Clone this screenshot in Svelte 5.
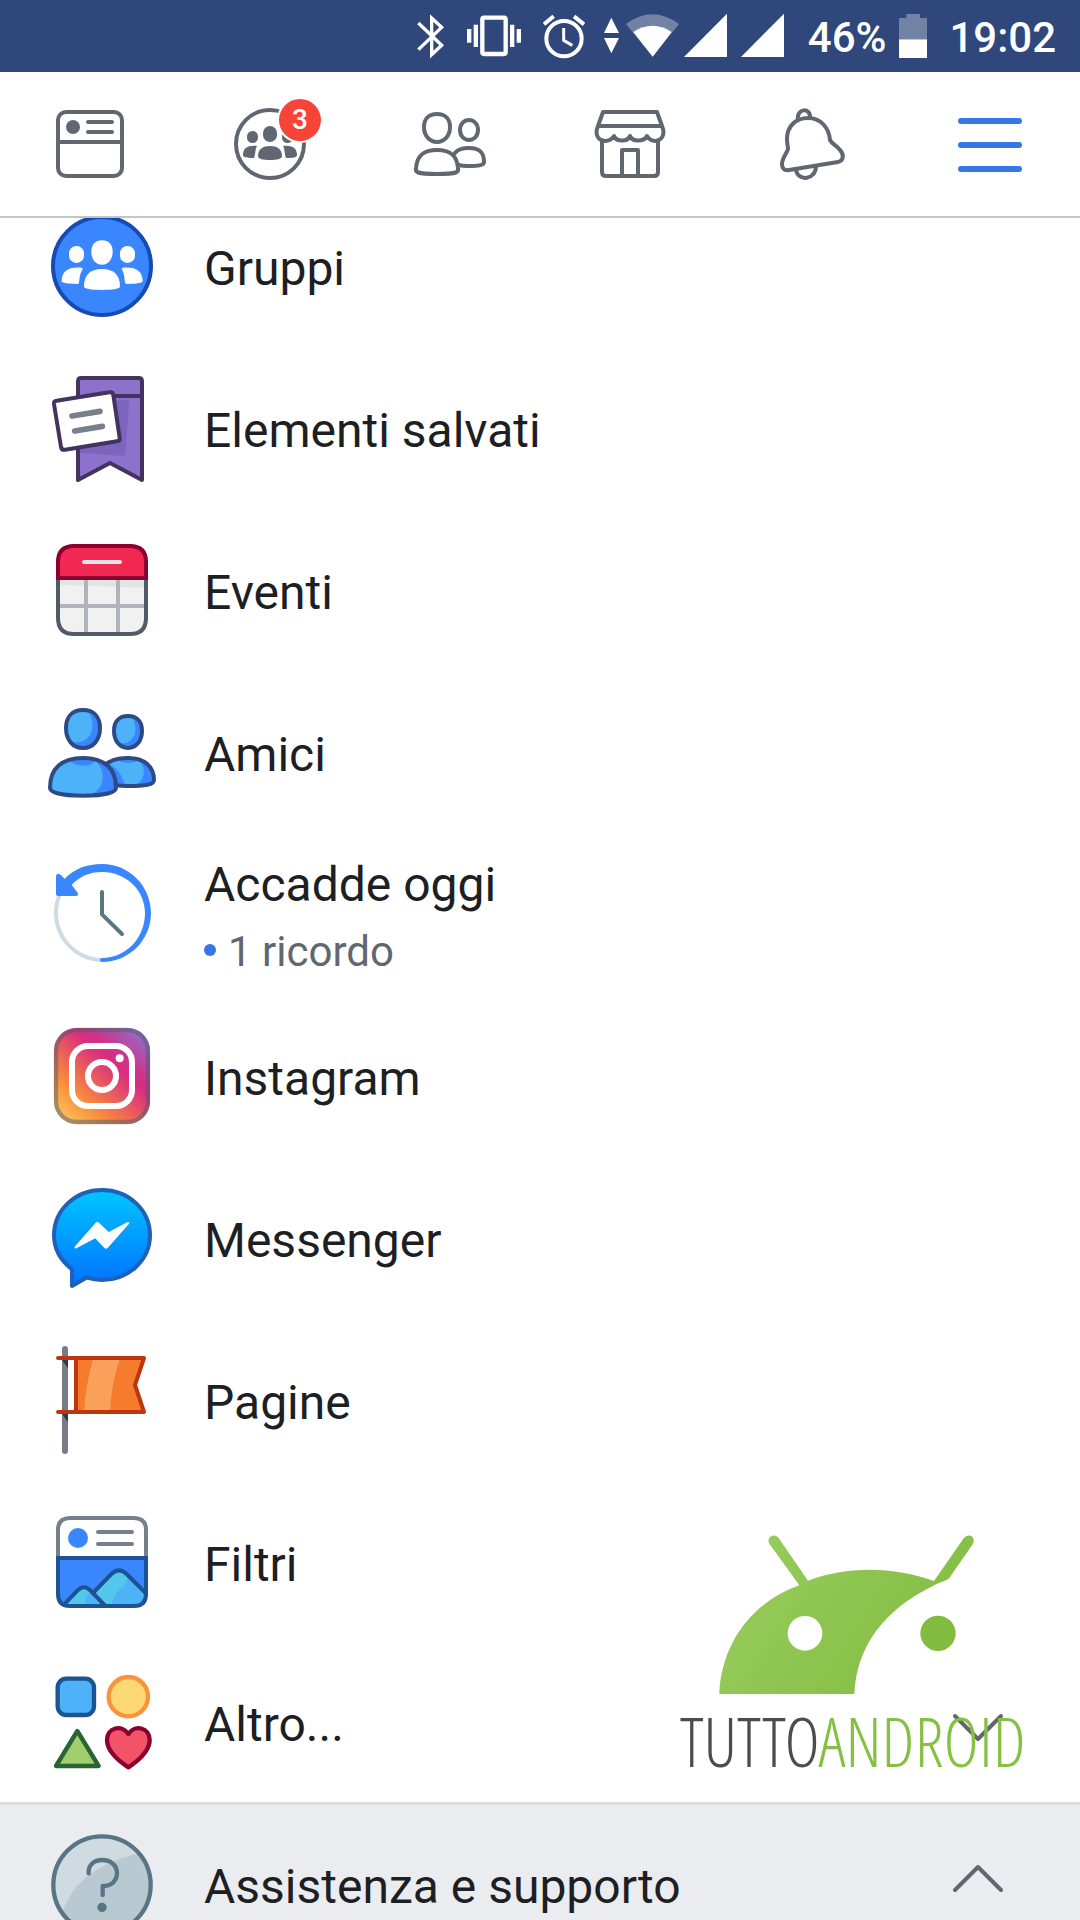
<script>
  const tabs = ['Notizie', 'Gruppi', 'Amici', 'Marketplace', 'Notifiche', 'Menu'];

  const items = [
    { id: 'groups', label: 'Gruppi' },
    { id: 'saved', label: 'Elementi salvati' },
    { id: 'events', label: 'Eventi' },
    { id: 'friends', label: 'Amici' },
    { id: 'memories', label: 'Accadde oggi', note: '1 ricordo' },
    { id: 'instagram', label: 'Instagram' },
    { id: 'messenger', label: 'Messenger' },
    { id: 'pages', label: 'Pagine' },
    { id: 'filters', label: 'Filtri' }
  ];
</script>

{#snippet tabIcon(name)}
  <svg class="tab-icon" viewBox="0 0 72 72" aria-hidden="true">
    {#if name === 'Notizie'}
      <rect x="4" y="4" width="64" height="64" rx="8" />
      <path d="M4 34H68M34 14H58M34 24H58" />
      <circle class="solid" cx="19" cy="19" r="7" />
    {:else if name === 'Gruppi'}
      <circle cx="36" cy="36" r="34" />
      <g class="solid">
        <rect x="29" y="18" width="14" height="16" rx="7" />
        <path d="M24 48C24 41 29 38 36 38S48 41 48 48C48 51 43 52 36 52S24 51 24 48Z" />
        <rect x="13" y="23" width="11" height="12" rx="5.5" />
        <rect x="48" y="23" width="11" height="12" rx="5.5" />
        <path d="M9 47C9 40 14 37 23 38C21 41 22 44 20 50C15 50 9 50 9 47Z" />
        <path d="M63 47C63 40 58 37 49 38C51 41 50 44 52 50C57 50 63 50 63 47Z" />
      </g>
    {:else if name === 'Amici'}
      <path d="M23 6C31 6 36 11 36 19C36 28 30 34 23 34S10 28 10 19C10 11 15 6 23 6Z" />
      <path d="M55 12C60 12 64 16 64 22C64 28 60 32 55 32S46 28 46 22C46 16 50 12 55 12Z" />
      <path d="M2 60C3 48 9 42 23 42S43 48 44 60C45 64 44 66 23 66S1 64 2 60Z" />
      <path d="M41 45C44 41 49 40 55 40C66 40 70 45 70 54C70 57 65 58 55 58C51 58 48 58 45 57" />
    {:else if name === 'Marketplace'}
      <path d="M9 4H63L68 18H4ZM4 18C0 27 5 33 11 33C15 33 18 31 20 28C22 34 34 34 36 28C38 34 50 34 53 28C55 31 58 33 61 33C67 33 72 27 68 18" />
      <path d="M8 32V64Q8 68 12 68H60Q64 68 64 64V32M28 68V42H44V68" />
    {:else if name === 'Notifiche'}
      <path d="M24 12C22 0 37 -1 36 10M22 62C24 74 42 72 42 58" />
      <path d="M34 10C21 10 13 19 13 31C13 36 14 38 14 41C13 45 8 50 8 56C8 60 10 63 15 62L64 54C70 53 70 46 66 42C62 37 58 36 56 32C55 20 47 10 34 10Z" />
    {:else}
      <path class="bars" d="M7 13H65M7 37H65M7 61H65" />
    {/if}
  </svg>
{/snippet}

{#snippet people()}
  <g fill="#fff">
    <path d="M216 91C236 91 248 104 248 125C248 148 235 164 216 164S184 148 184 125C184 104 196 91 216 91Z" />
    <path d="M216 177C252 177 270 196 270 229C270 237 250 240 216 240S162 237 162 229C162 196 180 177 216 177Z" />
    <rect x="117" y="108" width="45" height="51" rx="22" />
    <rect x="270" y="108" width="45" height="51" rx="22" />
    <path d="M95 213C96 184 113 170 155 173Q160 174 157 179C149 191 149 204 147 218Q147 222 142 222C110 221 95 219 95 213Z" />
    <path d="M338 213C337 184 320 170 278 173Q273 174 276 179C284 191 283 204 285 218Q286 222 291 222C323 221 338 219 338 213Z" />
  </g>
{/snippet}

{#snippet itemIcon(id)}
  {#if id === 'groups'}
    <svg class="icon" viewBox="54 6 324 324" aria-hidden="true">
      <circle cx="216" cy="168" r="147" fill="#3a86ff" stroke="#164bb5" stroke-width="12" />
      {@render people()}
    </svg>
  {:else if id === 'saved'}
    <svg class="icon" viewBox="54 492 324 324" stroke-width="12" stroke-linejoin="round" stroke-linecap="round" aria-hidden="true">
      <path d="M144 810V514Q144 504 154 504H326Q336 504 336 514V810L240 759Z" fill="#8c72cb" stroke="#44335f" />
      <path d="M150 570H288Q298 570 297 580L286 730Q285 739 276 738L150 728Z" fill="#7d64bf" />
      <path d="M230 558H336" stroke="#44335f" />
      <path d="M80 572L238 547Q248 545 250 555L269 684Q270 693 261 694L105 719Q95 721 93 711L72 582Q71 573 80 572Z" fill="#fff" stroke="#44335f" />
      <path d="M126 618L210 604M134 663L217 649" stroke="#777f8b" stroke-width="17" />
    </svg>
  {:else if id === 'events'}
    <svg class="icon" viewBox="54 48 324 324" fill="none" stroke-width="12" aria-hidden="true">
      <path d="M84 174V294Q84 342 132 342H300Q348 342 348 294V174Z" fill="#f1f1f2" />
      <path d="M84 180H348V204L84 194Z" fill="#e4e4e5" />
      <path d="M168 180V342M264 180V342M84 258H348" stroke="#b0b3bc" />
      <path d="M84 178V294Q84 342 132 342H300Q348 342 348 294V178" stroke="#505a6b" />
      <path d="M84 174V126Q84 78 132 78H300Q348 78 348 126V174Z" fill="#f02852" stroke="#8c0030" />
      <path d="M162 126H270" stroke="#e4e4e5" stroke-linecap="round" />
    </svg>
  {:else if id === 'friends'}
    <svg class="icon" viewBox="54 534 324 324" fill="none" stroke-width="12" stroke-linejoin="round" aria-hidden="true">
      <path d="M222 740C235 722 256 714 294 714C344 714 372 740 372 780C372 794 345 798 294 798C278 798 266 797 250 795Z" fill="#4db2f8" />
      <path d="M230 728C262 742 280 768 284 798H250Z" fill="#3a86ff" />
      <path d="M324 716C352 745 345 782 314 797C350 796 372 792 372 780C372 744 354 721 324 716Z" fill="#3a86ff" />
      <path d="M264 718H324C322 732 267 732 264 718Z" fill="#3a86ff" />
      <path d="M222 740C235 722 256 714 294 714C344 714 372 740 372 780C372 794 345 798 294 798C278 798 266 797 250 795" stroke="#2d4a86" />
      <path d="M159 714C222 714 258 745 258 803C258 820 215 827 159 827S60 820 60 803C60 745 96 714 159 714Z" fill="#4db2f8" />
      <path d="M190 717C232 748 226 808 180 826C227 825 258 818 258 803C258 754 234 725 190 717Z" fill="#3a86ff" />
      <path d="M120 716H196C198 744 122 744 120 716Z" fill="#3a86ff" />
      <path d="M159 714C222 714 258 745 258 803C258 820 215 827 159 827S60 820 60 803C60 745 96 714 159 714Z" stroke="#2d4a86" />
      <path d="M159 570C191 570 210 590 210 624C210 659 190 684 159 684S108 659 108 624C108 590 127 570 159 570Z" fill="#4db2f8" />
      <path d="M172 571C200 607 194 675 124 667C133 678 145 684 159 684C190 684 210 659 210 624C210 594 196 574 172 571Z" fill="#3a86ff" />
      <path d="M159 570C191 570 210 590 210 624C210 659 190 684 159 684S108 659 108 624C108 590 127 570 159 570Z" stroke="#2d4a86" />
      <path d="M294 588C320 588 336 604 336 632C336 662 319 684 294 684S252 662 252 632C252 604 268 588 294 588Z" fill="#4db2f8" />
      <path d="M304 589C327 620 319 676 268 670C276 680 284 684 294 684C319 684 336 662 336 632C336 608 324 591 304 589Z" fill="#3a86ff" />
      <path d="M294 588C320 588 336 604 336 632C336 662 319 684 294 684S252 662 252 632C252 604 268 588 294 588Z" stroke="#2d4a86" />
    </svg>
  {:else if id === 'memories'}
    <svg class="icon" viewBox="54 60 324 324" fill="none" aria-hidden="true">
      <path d="M90 162A141 141 0 0 0 216 360" stroke="#cfdbe2" stroke-width="12" />
      <path d="M104 116C132 86 172 72 216 72C298 72 363 138 363 219C363 300 298 366 216 366Q210 366 210 360T216 354C288 354 345 294 345 219C345 150 288 96 216 96C178 96 148 110 125 135L142 157Q148 168 137 168H84Q78 168 78 162V108Q80 98 90 103Z" fill="#3a86ff" />
      <path d="M216 156V223L276 282" stroke="#5b7683" stroke-width="12" stroke-linecap="round" stroke-linejoin="round" />
    </svg>
  {:else if id === 'instagram'}
    <svg class="icon" viewBox="54 546 324 324" aria-hidden="true">
      <defs>
        <linearGradient id="ig" x1="0.08" y1="1" x2="0.94" y2="0.04">
          <stop offset="0" stop-color="#fccb62" />
          <stop offset="0.25" stop-color="#f98f3b" />
          <stop offset="0.64" stop-color="#d92d7f" />
          <stop offset="0.72" stop-color="#d0328a" />
          <stop offset="1" stop-color="#8a73cf" />
        </linearGradient>
      </defs>
      <rect x="72" y="564" width="288" height="288" rx="68" fill="url(#ig)" />
      <rect x="78" y="570" width="276" height="276" rx="62" fill="none" stroke="#505a6b" stroke-opacity="0.5" stroke-width="13" />
      <rect x="126" y="618" width="180" height="180" rx="48" fill="none" stroke="#fff" stroke-width="18" />
      <circle cx="216" cy="708" r="42" fill="none" stroke="#fff" stroke-width="18" />
      <circle cx="269" cy="655" r="12" fill="#fff" />
    </svg>
  {:else if id === 'messenger'}
    <svg class="icon" viewBox="54 72 324 324" aria-hidden="true">
      <defs>
        <linearGradient id="ms" x1="0" y1="0" x2="0" y2="1">
          <stop offset="0" stop-color="#00c6ff" />
          <stop offset="1" stop-color="#0072ff" />
        </linearGradient>
      </defs>
      <path d="M126 378V328C92 302 72 268 72 226C72 150 136 90 216 90S360 150 360 226C360 300 296 360 216 360C198 360 184 357 169 353Z" fill="url(#ms)" stroke="#2160b8" stroke-width="12" stroke-linejoin="round" />
      <path d="M134 260L197 188Q202 184 207 188L236 216L293 186Q300 185 297 191L233 264Q228 269 223 264L196 235L139 265Q131 267 134 260Z" fill="#fff" />
    </svg>
  {:else if id === 'pages'}
    <svg class="icon" viewBox="54 558 324 324" fill="none" stroke-linejoin="round" stroke-linecap="round" aria-hidden="true">
      <path d="M105 567V873" stroke="#777c88" stroke-width="18" />
      <path d="M96 600H114V625ZM96 762H114V787Z" fill="#303947" />
      <path d="M138 594H342L315 675L342 756H138Z" fill="#f57c2c" />
      <path d="M190 594H270Q243 675 240 756H162Q167 675 190 594Z" fill="#f9a15a" />
      <path d="M84 594H342L315 675L342 756H84M138 594V756" stroke="#bc3710" stroke-width="12" />
    </svg>
  {:else if id === 'filters'}
    <svg class="icon" viewBox="54 54 324 324" fill="none" stroke-width="12" aria-hidden="true">
      <defs>
        <clipPath id="photo"><path d="M84 204H348V310Q348 348 312 348H120Q84 348 84 310Z" /></clipPath>
      </defs>
      <path d="M84 204V120Q84 84 120 84H312Q348 84 348 120V204" stroke="#777f8b" />
      <circle cx="144" cy="144" r="30" fill="#3a86ff" />
      <path d="M204 126H306M204 162H306" stroke="#777f8b" stroke-linecap="round" />
      <g clip-path="url(#photo)">
        <path d="M84 204H348V348H84Z" fill="#3a86ff" />
        <path d="M180 320L244 252Q267 230 290 252L360 322V360H180Z" fill="#54c7ec" />
        <path d="M290 252C302 295 246 292 247 348H360V322Z" fill="#4db2f8" />
        <path d="M190 308L244 252Q267 230 290 252L360 322" stroke="#1c5393" />
        <path d="M90 356L142 302Q160 282 180 300L234 356Z" fill="#54c7ec" />
        <path d="M180 302C182 314 160 314 167 350H234Z" fill="#4db2f8" />
        <path d="M90 356L142 302Q160 282 180 300L234 356" stroke="#1c5393" />
      </g>
      <path d="M84 204H348V312Q348 348 312 348H120Q84 348 84 312Z" stroke="#1c5393" />
    </svg>
  {:else if id === 'more'}
    <svg class="icon" viewBox="54 534 324 324" stroke-width="13" stroke-linejoin="round" aria-hidden="true">
      <rect x="83" y="566" width="109" height="109" rx="26" fill="#4db2f8" stroke="#1c5393" />
      <circle cx="295" cy="620" r="59" fill="#fbd872" stroke="#f8943d" />
      <path d="M142 723L206 828H78Z" fill="#a0cf6b" stroke="#2c6335" />
      <path d="M295 832C256 806 231 778 231 750C231 712 276 702 295 732C314 702 359 712 359 750C359 778 334 806 295 832Z" fill="#f35369" stroke="#8c0030" />
    </svg>
  {:else}
    <svg class="icon" viewBox="54 150 324 324" fill="none" stroke-width="13" aria-hidden="true">
      <defs><clipPath id="help"><circle cx="216" cy="315" r="146" /></clipPath></defs>
      <circle cx="216" cy="315" r="146" fill="#cfdae1" />
      <path clip-path="url(#help)" d="M340 218C220 240 125 300 94 405V480H380V218Z" fill="#b9c9d2" />
      <circle cx="216" cy="315" r="146" stroke="#587585" />
      <path d="M176 280C174 253 194 240 216 240C244 240 261 257 261 280C261 303 243 318 218 318V345" stroke="#587585" stroke-linecap="round" stroke-linejoin="round" />
      <circle cx="216" cy="382" r="14" fill="#587585" />
    </svg>
  {/if}
{/snippet}

<div class="screen">
  <div class="status">
    <svg width="28" height="72" viewBox="52 0 84 216" fill="none" stroke="#fff" stroke-width="10" aria-hidden="true">
      <path d="M56 69L126 136L96 164V54L126 82L56 149" />
    </svg>
    <svg width="54" height="72" viewBox="201 0 162 216" aria-hidden="true">
      <rect x="247" y="53" width="70" height="109" rx="5" fill="none" stroke="#fff" stroke-width="13" />
      <path d="M201 87H214V128H201ZM221 74H234V141H221ZM330 74H343V141H330ZM350 87H363V128H350Z" fill="#fff" />
    </svg>
    <svg width="42" height="72" viewBox="425 0 126 216" fill="none" stroke="#fff" stroke-width="12" aria-hidden="true">
      <circle cx="488" cy="116" r="53" />
      <path d="M428 73L457 49M548 73L518 49" />
      <path d="M487 84V121L513 136" stroke-width="9" />
    </svg>
    <svg class="network" width="180" height="72" viewBox="609 0 540 216" fill="#fff" aria-hidden="true">
      <path d="M631 53L654 99H609ZM609 114H654L631 160Z" />
      <path opacity="0.32" d="M675 72Q754 14 834 72L755 170Z" />
      <path d="M697 96Q755 58 812 96L755 170Z" />
      <path d="M978 41V171H849ZM1149 41V171H1020Z" />
    </svg>
    <span class="percent">46%</span>
    <svg width="28" height="72" viewBox="477 0 84 216" fill="#fff" aria-hidden="true">
      <path opacity="0.32" d="M477 54H499V42H540V54H561V118H477Z" />
      <path d="M477 118H561V174H477Z" />
    </svg>
    <time>19:02</time>
  </div>

  <nav class="tabs" aria-label="Sezioni">
    {#each tabs as name}
      <a href="#{name.toLowerCase()}" class:active={name === 'Menu'} aria-label={name}>
        <span class="tab-box">
          {@render tabIcon(name)}
          {#if name === 'Gruppi'}<span class="badge">3</span>{/if}
        </span>
      </a>
    {/each}
  </nav>

  <main>
    <div class="shortcuts">
      <ul>
        {#each items as item}
          <li>
            <a class="row" href="#{item.id}">
              {@render itemIcon(item.id)}
              <span class="label">
                <span class="title">{item.label}</span>
                {#if item.note}<span class="note">{item.note}</span>{/if}
              </span>
            </a>
          </li>
        {/each}
      </ul>
      <button class="row section" type="button" aria-expanded="false">
        {@render itemIcon('more')}
        <span class="label"><span class="title">Altro...</span></span>
        <svg class="chevron" viewBox="0 0 60 60" aria-hidden="true"><path d="M7 24L30 47L53 24" /></svg>
      </button>

      <div class="watermark">
        <svg viewBox="60 72 1035 480" aria-hidden="true">
          <defs>
            <linearGradient id="head" x1="0" y1="0.3" x2="1" y2="0.7">
              <stop offset="0" stop-color="#98cc5c" />
              <stop offset="1" stop-color="#81bc41" />
            </linearGradient>
          </defs>
          <path fill="url(#head)" fill-rule="evenodd" d="M178 552C184 400 276 276 418 226L328 101C318 82 342 66 356 84L444 212C565 166 705 170 822 213L911 85C927 65 950 83 938 103L868 204C856 215 838 216 820 227C670 300 590 410 583 552ZM487 370A52 52 0 1 0 383 370A52 52 0 1 0 487 370Z" />
          <circle cx="834" cy="370" r="53" fill="#81bc41" />
        </svg>
        <p><span>TUTTO</span>ANDROID</p>
      </div>
    </div>

    <button class="row section help" type="button" aria-expanded="true">
      {@render itemIcon('help')}
      <span class="label"><span class="title">Assistenza e supporto</span></span>
      <svg class="chevron" viewBox="0 0 60 60" aria-hidden="true"><path d="M7 36L30 13L53 36" /></svg>
    </button>
  </main>
</div>

<style>
  :global(body) {
    margin: 0;
    background: #fff;
  }

  .screen {
    display: flex;
    flex-direction: column;
    height: 100vh;
    overflow: hidden;
    font-family: Roboto, sans-serif;
    color: #1d1f23;
  }

  .status {
    display: flex;
    align-items: center;
    justify-content: flex-end;
    gap: 22px;
    flex: none;
    height: 72px;
    padding-right: 24px;
    background: #2f477a;
    color: #fff;
    font-size: 42px;
    font-weight: 500;
    line-height: 72px;
  }

  .network {
    margin: 0 2px 0 -3px;
  }

  .percent {
    margin-right: -9px;
  }

  time,
  .percent {
    padding-top: 4px;
  }

  .tabs {
    display: grid;
    grid-template-columns: repeat(6, 1fr);
    flex: none;
    border-bottom: 2px solid #c4c5cb;
  }

  .tabs a {
    display: flex;
    justify-content: center;
    padding: 36px 0;
    color: #606770;
  }

  .tabs a.active {
    color: #3578e5;
  }

  .tab-box {
    position: relative;
    display: block;
    width: 72px;
    height: 72px;
  }

  .tab-icon {
    display: block;
    width: 72px;
    height: 72px;
    overflow: visible;
    fill: none;
    stroke: currentColor;
    stroke-width: 4;
    stroke-linecap: round;
    stroke-linejoin: round;
  }

  .solid {
    fill: currentColor;
    stroke: none;
  }

  .bars {
    stroke-width: 6;
  }

  .badge {
    position: absolute;
    top: -9px;
    right: -15px;
    width: 42px;
    height: 42px;
    border-radius: 50%;
    box-shadow: 0 0 0 2px #fff;
    background: #f64438;
    color: #fff;
    font-size: 28px;
    font-weight: 500;
    line-height: 42px;
    text-align: center;
  }

  main {
    flex: 1;
    min-height: 0;
    overflow: hidden;
  }

  .shortcuts {
    position: relative;
    margin-top: -33px;
  }

  ul {
    margin: 0;
    padding: 0;
    list-style: none;
  }

  .row {
    display: flex;
    align-items: center;
    gap: 48px;
    box-sizing: border-box;
    width: 100%;
    padding: 27px 72px 27px 48px;
    border: 0;
    background: none;
    color: inherit;
    font: inherit;
    text-align: left;
    text-decoration: none;
  }

  .section {
    padding-top: 25px;
    padding-bottom: 26px;
  }

  .help {
    border-top: 3px solid #dcdde2;
    background: #ebecf0;
  }

  .icon {
    flex: none;
    width: 108px;
    height: 108px;
  }

  .label {
    display: flex;
    flex: 1;
    flex-direction: column;
    gap: 14px;
    margin: -10px 0;
    padding-top: 5px;
  }

  .title {
    font-size: 48px;
    line-height: 56px;
  }

  .note {
    display: flex;
    align-items: center;
    gap: 12px;
    color: #606770;
    font-size: 42px;
    line-height: 50px;
  }

  .note::before {
    content: '';
    width: 12px;
    height: 12px;
    margin-bottom: 4px;
    border-radius: 50%;
    background: #3578e5;
  }

  .chevron {
    flex: none;
    width: 60px;
    height: 60px;
    fill: none;
    stroke: #606770;
    stroke-width: 4;
    stroke-linecap: round;
    stroke-linejoin: round;
  }

  .watermark {
    position: absolute;
    right: 55px;
    bottom: 14px;
    width: 345px;
    pointer-events: none;
  }

  .watermark svg {
    display: block;
    width: 345px;
    height: 160px;
  }

  .watermark p {
    margin: 0;
    color: #86c043;
    font-family: 'Open Sans Condensed Light', 'Open Sans Condensed', 'Open Sans', Roboto, sans-serif;
    font-size: 68px;
    font-weight: 300;
    line-height: 94px;
    white-space: nowrap;
  }

  .watermark span {
    color: #4c4c4e;
  }
</style>
